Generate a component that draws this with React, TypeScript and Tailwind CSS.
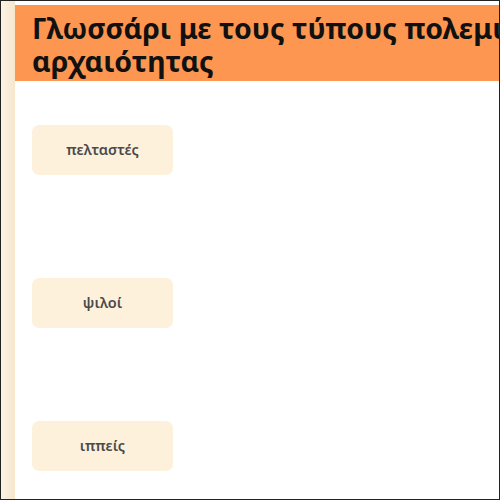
import React from "react";

export default function App() {
  const items = ["πελταστές", "ψιλοί", "ιππείς"];
  return (
    <div
      className="w-[500px] h-[500px] overflow-hidden bg-white border border-[#222] flex"
      style={{ fontFamily: '"Noto Sans", "Open Sans", sans-serif' }}
    >
      <div className="w-[14px] shrink-0 bg-gradient-to-r from-[#fbf3e6] to-[#f6e6cc]" />
      <div className="flex-1 min-w-0 flex flex-col pt-[4px]">
        <div className="bg-[#fd9650] h-[76px] pl-[17px] pt-[7px] overflow-hidden">
          <h1 className="whitespace-nowrap text-[28.5px] leading-[33px] font-bold text-[#111]">
            Γλωσσάρι με τους τύπους πολεμιστών της
            <br />
            αρχαιότητας
          </h1>
        </div>
        <div className="flex flex-col pl-[17px] pt-[44px]">
          <div className="w-[141px] h-[50px] rounded-[7px] bg-[#fdf1dc] flex items-center justify-center text-[14.5px] font-semibold text-[#4a4a4a]">
            {items[0]}
          </div>
          <div className="mt-[103px] w-[141px] h-[50px] rounded-[7px] bg-[#fdf1dc] flex items-center justify-center text-[14.5px] font-semibold text-[#4a4a4a]">
            {items[1]}
          </div>
          <div className="mt-[93px] w-[141px] h-[50px] rounded-[7px] bg-[#fdf1dc] flex items-center justify-center text-[14.5px] font-semibold text-[#4a4a4a]">
            {items[2]}
          </div>
        </div>
      </div>
    </div>
  );
}
